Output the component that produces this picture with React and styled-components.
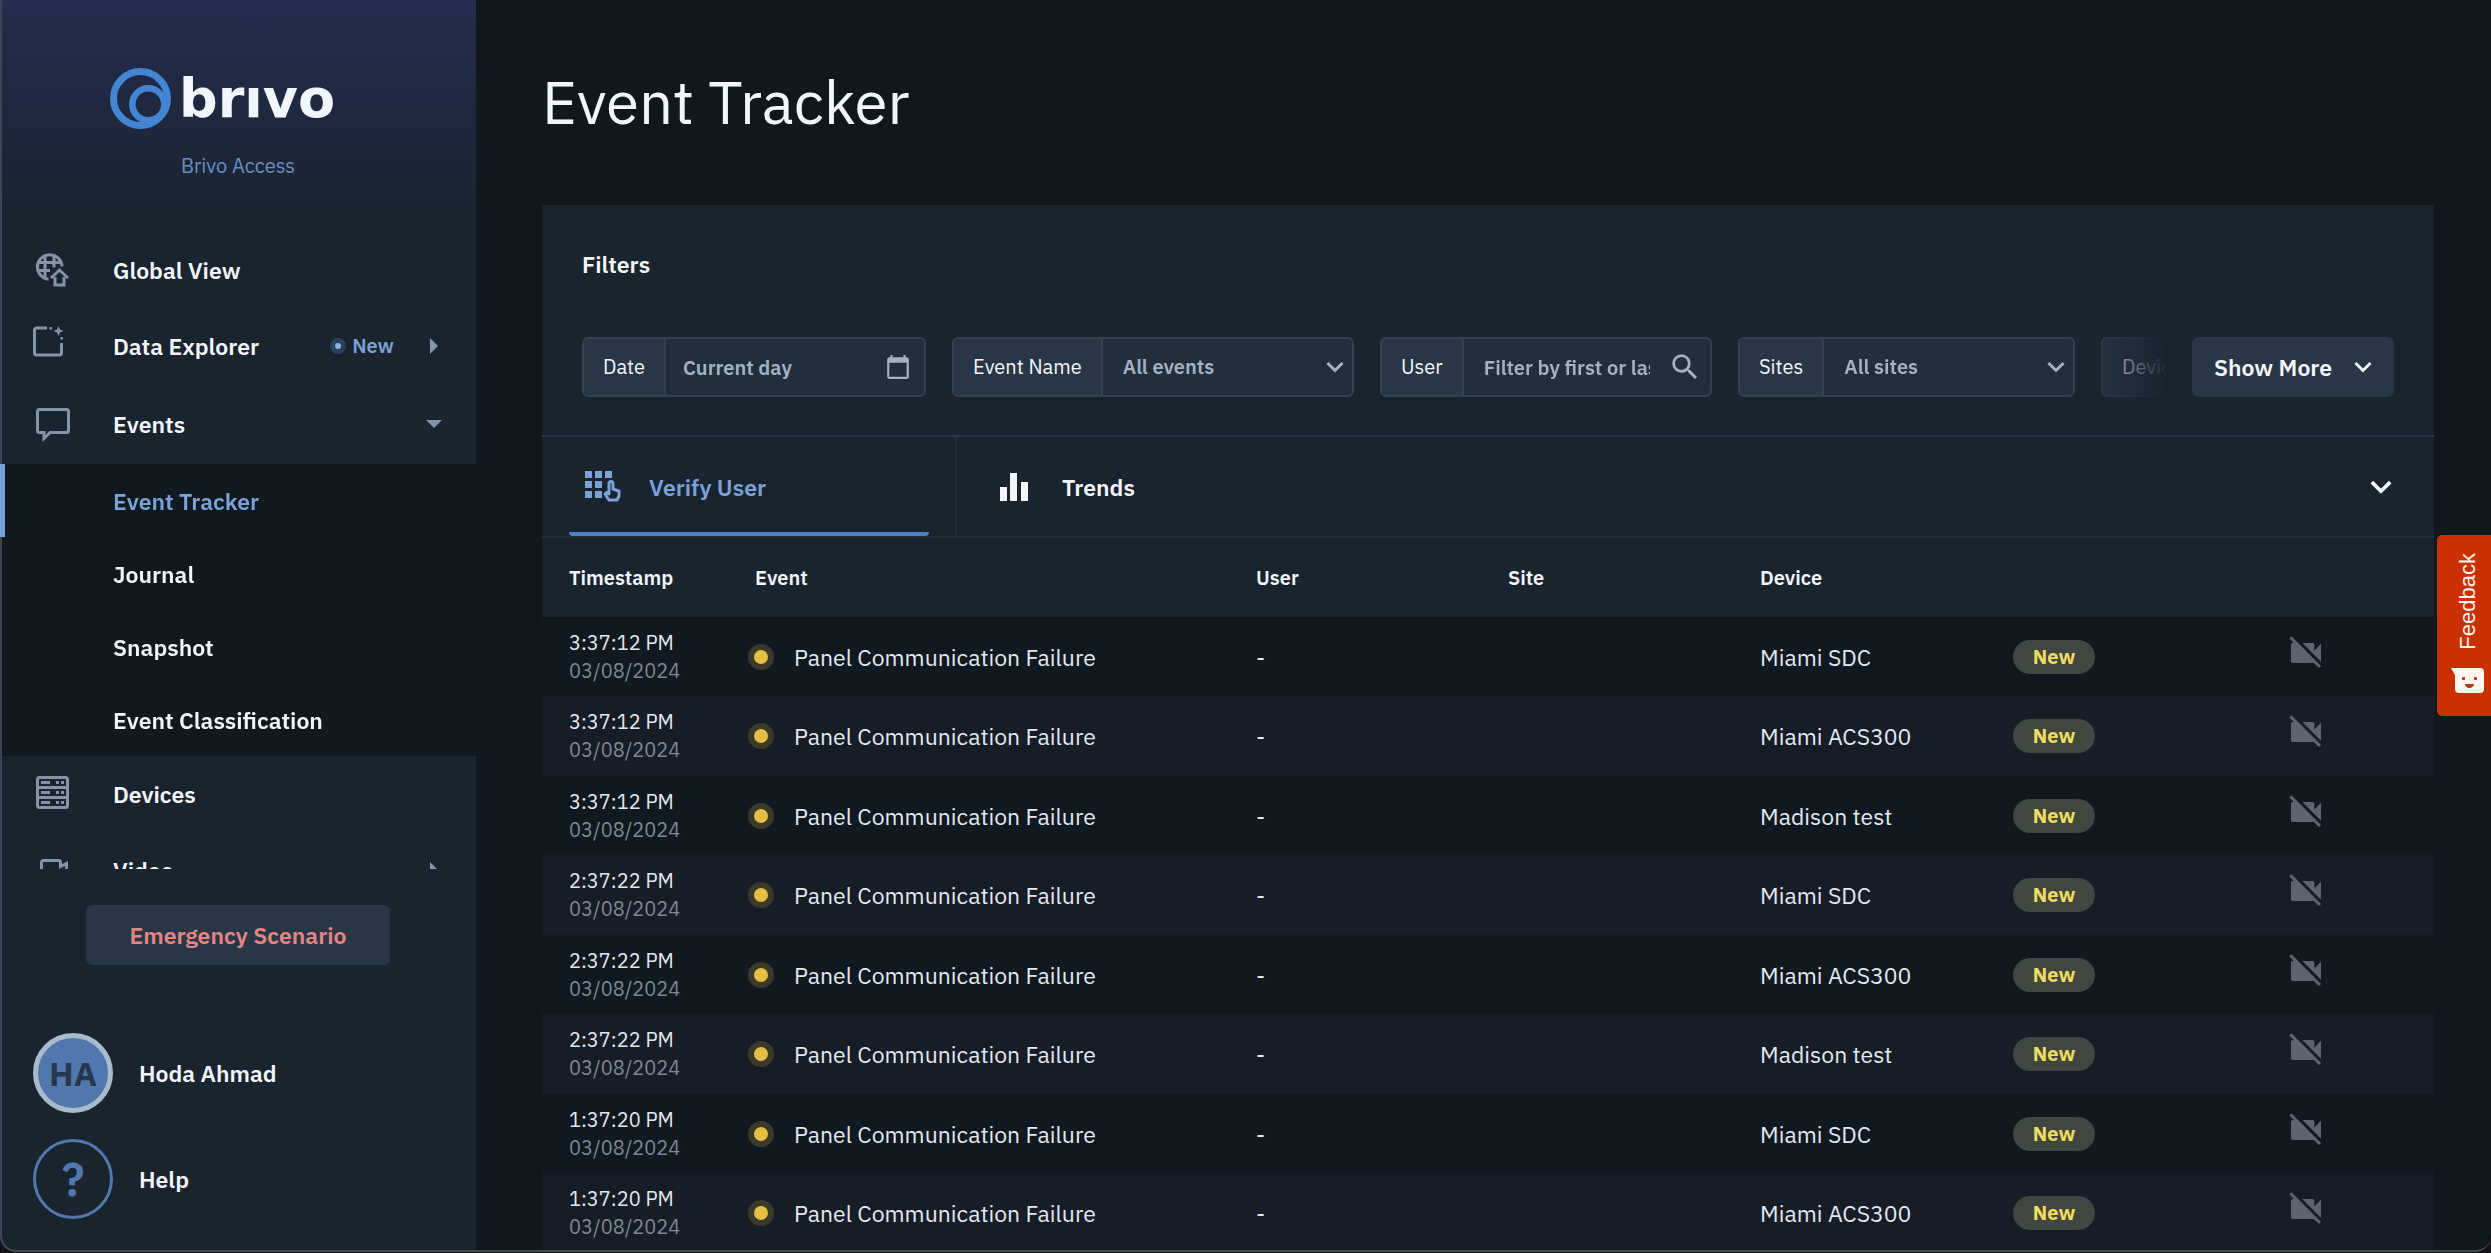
import React from "react";
import styled, { createGlobalStyle, css } from "styled-components";
import { MdSearch, MdVideocamOff } from "react-icons/md";

const events = [
  { time: "3:37:12 PM", device: "Miami SDC" },
  { time: "3:37:12 PM", device: "Miami ACS300" },
  { time: "3:37:12 PM", device: "Madison test" },
  { time: "2:37:22 PM", device: "Miami SDC" },
  { time: "2:37:22 PM", device: "Miami ACS300" },
  { time: "2:37:22 PM", device: "Madison test" },
  { time: "1:37:20 PM", device: "Miami SDC" },
  { time: "1:37:20 PM", device: "Miami ACS300" },
];

const subPages = ["Event Tracker", "Journal", "Snapshot", "Event Classification"];

const GlobeIcon = () => (
  <svg width="40" height="40" viewBox="0 0 40 40" fill="none" stroke="currentColor" strokeWidth="3">
    <path d="M15.500 29.200A12.300 12.300 0 1 1 29 16.500" />
    <path d="M4 12.500h25M4 20.500h13M12 4.500v24M21 4.500v13" />
    <path d="M18 28l8.500-8 8.500 8M22 27v8h9v-8" />
  </svg>
);

const ExplorerIcon = () => (
  <svg width="40" height="40" viewBox="0 0 40 40" fill="none" stroke="currentColor" strokeWidth="3">
    <path d="M14 2H3.500a2 2 0 0 0-2 2v23a2 2 0 0 0 2 2h23a2 2 0 0 0 2-2V17" />
    <path
      d="M25.500 0l1.500 3.500 3.500 1.500-3.500 1.500-1.500 3.500-1.500-3.500-3.500-1.500 3.500-1.500zM16.500 1h2.500v2.500h-2.500zM27.500 11h2.500v2.500h-2.500z"
      fill="currentColor"
      stroke="none"
    />
  </svg>
);

const BubbleIcon = () => (
  <svg width="40" height="40" viewBox="0 0 40 40" fill="none" stroke="currentColor" strokeWidth="3">
    <path d="M6.500 5.500h27a2 2 0 0 1 2 2v19a2 2 0 0 1-2 2H17l-6 6v-6H6.500a2 2 0 0 1-2-2v-19a2 2 0 0 1 2-2z" />
  </svg>
);

const ServerIcon = () => (
  <svg width="40" height="40" viewBox="0 0 40 40" fill="none" stroke="currentColor" strokeWidth="3">
    <rect x="4.500" y="3.500" width="30" height="30" rx="2" />
    <path d="M4 13.500h31M4 23.500h31" />
    <path d="M8 8.500h9M23 8.500h3M28 8.500h3M8 18.500h9M23 18.500h3M28 18.500h3M8 28.500h9M23 28.500h3M28 28.500h3" />
  </svg>
);

const VideoIcon = () => (
  <svg width="40" height="40" viewBox="0 0 40 40" fill="none" stroke="currentColor" strokeWidth="3">
    <path d="M10.500 10.500h15a2 2 0 0 1 2 2v4l6-3v13l-6-3v4a2 2 0 0 1-2 2h-15a2 2 0 0 1-2-2v-15a2 2 0 0 1 2-2z" />
  </svg>
);

const KeypadIcon = () => (
  <svg width="36" height="32" viewBox="0 0 36 32" fill="currentColor">
    <path d="M0 0h7v7H0zM10 0h7v7h-7zM20 0h7v7h-7zM0 10h7v7H0zM10 10h7v7h-7zM0 20h7v7H0zM10 20h7v7h-7z" />
    <path
      d="M24 12.500a2 2 0 0 1 4 0V18l6 2v5l-2 4h-8l-4-6 1.500-1.500L24 23z"
      fill="none"
      stroke="currentColor"
      strokeWidth="3"
      strokeLinejoin="round"
    />
  </svg>
);

const ChartIcon = () => (
  <svg width="28" height="28" viewBox="0 0 28 28" fill="currentColor">
    <path d="M0 14h7v14H0zM10 0h7v28h-7zM21 9h7v19h-7z" />
  </svg>
);

const CalendarIcon = () => (
  <svg width="26" height="26" viewBox="0 0 24 24" fill="currentColor">
    <path d="M20 3h-1V1h-2v2H7V1H5v2H4c-1.100 0-2 .9-2 2v16c0 1.100.9 2 2 2h16c1.100 0 2-.9 2-2V5c0-1.100-.9-2-2-2zm0 18H4V8h16v13z" />
  </svg>
);

const Chevron = ({ size = 18 }) => (
  <svg width={size} height={size} viewBox="0 0 18 18" fill="none" stroke="currentColor" strokeWidth="3">
    <path d="M1.500 5l7.500 7.500L16.500 5" />
  </svg>
);

const SmileIcon = () => (
  <svg width="34" height="26" viewBox="0 0 34 26">
    <path d="M0 0h29a4 4 0 0 1 4 4v17a4 4 0 0 1-4 4H8a4 4 0 0 1-4-4V7z" fill="#fff4ee" />
    <rect x="11" y="9" width="3" height="3" rx="1" fill="#a33a1c" />
    <rect x="23" y="9" width="3" height="3" rx="1" fill="#a33a1c" />
    <path d="M14 16h9a4.500 4 0 0 1-9 0z" fill="#a33a1c" />
  </svg>
);

function Logo() {
  return (
    <LogoRow>
      <svg width="61" height="61" viewBox="0 0 61 61" fill="none" stroke="#4385d2">
        <circle cx="30.500" cy="30.500" r="27" strokeWidth="7" />
        <circle cx="38.300" cy="36.300" r="16" strokeWidth="6.500" />
      </svg>
      <Wordmark>brıvo</Wordmark>
    </LogoRow>
  );
}

function Sidebar() {
  return (
    <Aside>
      <Brand>
        <Logo />
        <Product>Brivo Access</Product>
      </Brand>
      <Nav>
        <NavItem href="#global">
          <GlobeIcon />
          <NavLabel>Global View</NavLabel>
        </NavItem>
        <NavItem href="#explorer">
          <ExplorerIcon />
          <NavLabel>Data Explorer</NavLabel>
          <NewTag>
            <NewDot />
            New
          </NewTag>
          <Caret />
        </NavItem>
        <NavItem href="#events" $tall>
          <BubbleIcon />
          <NavLabel>Events</NavLabel>
          <Caret $open />
        </NavItem>
        <SubNav>
          {subPages.map((page, i) => (
            <SubItem key={page} href={`#page-${i}`} $active={i === 0}>
              {page}
            </SubItem>
          ))}
        </SubNav>
        <NavItem href="#devices">
          <ServerIcon />
          <NavLabel>Devices</NavLabel>
        </NavItem>
        <NavItem href="#video">
          <VideoIcon />
          <NavLabel>Video</NavLabel>
          <Caret />
        </NavItem>
      </Nav>
      <AsideFooter>
        <EmergencyButton type="button">Emergency Scenario</EmergencyButton>
        <FooterLink href="#account">
          <Avatar>HA</Avatar>
          Hoda Ahmad
        </FooterLink>
        <FooterLink href="#help">
          <Avatar $outline>?</Avatar>
          Help
        </FooterLink>
      </AsideFooter>
    </Aside>
  );
}

function Filters() {
  return (
    <FilterSection>
      <FilterTitle>Filters</FilterTitle>
      <FilterBar>
        <FilterTrack>
          <Field $width={344}>
            <FieldLabel htmlFor="date">Date</FieldLabel>
            <FieldBody $tight>
              <TextInput id="date" defaultValue="Current day" />
              <CalendarIcon />
            </FieldBody>
          </Field>
          <Field $width={402}>
            <FieldLabel htmlFor="event-name">Event Name</FieldLabel>
            <FieldBody>
              <Select id="event-name">
                <option>All events</option>
              </Select>
              <Chevron />
            </FieldBody>
          </Field>
          <Field $width={332}>
            <FieldLabel htmlFor="user">User</FieldLabel>
            <FieldBody>
              <TextInput id="user" placeholder="Filter by first or last name" />
              <SearchIcon size={34} />
            </FieldBody>
          </Field>
          <Field $width={337}>
            <FieldLabel htmlFor="sites">Sites</FieldLabel>
            <FieldBody>
              <Select id="sites">
                <option>All sites</option>
              </Select>
              <Chevron />
            </FieldBody>
          </Field>
          <Field $width={337}>
            <FieldLabel htmlFor="devices">Devices</FieldLabel>
            <FieldBody>
              <Select id="devices">
                <option>All devices</option>
              </Select>
              <Chevron />
            </FieldBody>
          </Field>
        </FilterTrack>
        <MoreButton type="button">
          Show More
          <Chevron />
        </MoreButton>
      </FilterBar>
    </FilterSection>
  );
}

function EventTable() {
  return (
    <Table>
      <colgroup>
        <Col $width={186} />
        <Col $width={501} />
        <Col $width={252} />
        <Col $width={252} />
        <Col $width={253} />
        <Col $width={277} />
        <Col $width={171} />
      </colgroup>
      <thead>
        <tr>
          <Th>Timestamp</Th>
          <Th>Event</Th>
          <Th>User</Th>
          <Th>Site</Th>
          <Th>Device</Th>
          <Th />
          <Th />
        </tr>
      </thead>
      <tbody>
        {events.map(({ time, device }, i) => (
          <Row key={i}>
            <Td>
              <Time>{time}</Time>
              <DateText>03/08/2024</DateText>
            </Td>
            <Td $inset={20}>
              <EventName>
                <Dot />
                Panel Communication Failure
              </EventName>
            </Td>
            <Td>-</Td>
            <Td />
            <Td>{device}</Td>
            <Td>
              <Pill>New</Pill>
            </Td>
            <IconCell>
              <MdVideocamOff size={40} />
            </IconCell>
          </Row>
        ))}
      </tbody>
    </Table>
  );
}

export default function App() {
  return (
    <>
      <GlobalStyle />
      <Shell>
        <Sidebar />
        <Main>
          <Title>Event Tracker</Title>
          <Card>
            <Filters />
            <Tabs>
              <TabSlot>
                <Tab type="button" $active>
                  <KeypadIcon />
                  Verify User
                </Tab>
              </TabSlot>
              <TabSlot>
                <Tab type="button">
                  <ChartIcon />
                  Trends
                </Tab>
              </TabSlot>
              <CollapseButton type="button" aria-label="Expand panel">
                <Chevron size={22} />
              </CollapseButton>
            </Tabs>
            <EventTable />
          </Card>
        </Main>
        <Feedback type="button">
          <FeedbackText>Feedback</FeedbackText>
          <SmileIcon />
        </Feedback>
      </Shell>
      <WindowEdge />
    </>
  );
}

const GlobalStyle = createGlobalStyle`
  * {
    box-sizing: border-box;
  }
  body {
    margin: 0;
    background: #10181e;
    color: #f2f6fb;
    font-family: "IBM Plex Sans", Roboto, sans-serif;
    font-size: 23px;
    line-height: 32px;
  }
  a {
    color: inherit;
    text-decoration: none;
  }
  button, input, select {
    font: inherit;
    color: inherit;
    border: 0;
    background: none;
    padding: 0;
    margin: 0;
  }
  svg {
    flex: none;
    display: block;
  }
`;

const Shell = styled.div`
  display: flex;
  height: 100vh;
  overflow: hidden;
`;
const WindowEdge = styled.div`
  position: fixed;
  inset: 0 0 1px;
  z-index: 1;
  pointer-events: none;
  border-left: 2px solid #3c4553;
  border-bottom: 2px solid #434853;
  border-radius: 0 0 16px 16px;
  box-shadow: 0 0 0 8px #14111a;
`;

/* Sidebar */
const Aside = styled.aside`
  flex: none;
  width: 476px;
  display: flex;
  flex-direction: column;
  font-weight: 600;
  background: linear-gradient(#242c50, #1a242f 215px);
`;
const Brand = styled.div`
  height: 232px;
  flex: none;
  padding-top: 68px;
  text-align: center;
`;
const LogoRow = styled.div`
  display: flex;
  align-items: center;
  gap: 8px;
  height: 61px;
  padding-left: 110px;
`;
const Wordmark = styled.span`
  font-family: "DejaVu Sans", sans-serif;
  font-weight: 700;
  font-size: 54px;
  line-height: 60px;
  color: #f1f5fc;
`;
const Product = styled.div`
  margin-top: 21px;
  font-size: 20px;
  font-weight: 400;
  color: #6a8ec4;
`;
const Nav = styled.nav`
  flex: 1;
  min-height: 0;
  overflow: hidden;
`;
const NavItem = styled.a`
  display: flex;
  align-items: center;
  height: ${({ $tall }) => ($tall ? 80 : 76)}px;
  padding: 0 34px 0 33px;

  > svg {
    color: #8394a6;
  }
`;
const NavLabel = styled.span`
  flex: 1;
  margin-left: 40px;
`;
const NewTag = styled.span`
  display: flex;
  align-items: center;
  gap: 6px;
  margin-right: 32px;
  font-size: 20px;
  color: #7ba1d9;
`;
const NewDot = styled.i`
  width: 16px;
  height: 16px;
  border: 5px solid #2a4160;
  border-radius: 50%;
  background: #8fb2e6;
`;
const Caret = styled.i`
  width: 16px;
  height: 16px;
  background: #8394a6;
  clip-path: ${({ $open }) =>
    $open ? "polygon(0 4px, 100% 4px, 50% 12px)" : "polygon(4px 0, 12px 50%, 4px 100%)"};
`;
const SubNav = styled.div`
  background: #101920;
`;
const SubItem = styled.a`
  position: relative;
  z-index: 2;
  display: flex;
  align-items: center;
  height: 73px;
  padding-left: 108px;
  border-left: 5px solid transparent;
  ${({ $active }) =>
    $active &&
    css`
      color: #7ba1d9;
      border-left-color: #7ba1d9;
    `}
`;
const AsideFooter = styled.div`
  flex: none;
  padding: 36px 33px 34px;
  display: flex;
  flex-direction: column;
  gap: 26px;
`;
const EmergencyButton = styled.button`
  align-self: center;
  width: 304px;
  height: 60px;
  margin-bottom: 42px;
  border-radius: 6px;
  background: #283747;
  color: #e68583;
  font-weight: 600;
`;
const FooterLink = styled.a`
  display: flex;
  align-items: center;
  gap: 26px;
`;
const Avatar = styled.span`
  display: flex;
  align-items: center;
  justify-content: center;
  width: 80px;
  height: 80px;
  border-radius: 50%;
  border: 5px solid #a9bacb;
  background: #5178ad;
  color: #25384f;
  font-size: 34px;
  font-weight: 700;
  ${({ $outline }) =>
    $outline &&
    css`
      border: 3px solid #5178ad;
      background: none;
      color: #5178ad;
      font-size: 46px;
      font-weight: 600;
    `}
`;

/* Main */
const Main = styled.main`
  flex: 1;
  min-width: 0;
  padding: 66px 57px 0 66px;
`;
const Title = styled.h1`
  margin: 0 0 67px;
  font-size: 60px;
  line-height: 72px;
  font-weight: 400;
`;
const Card = styled.section`
  background: #1a242f;
`;
const FilterSection = styled.div`
  padding: 43px 40px 38px;
`;
const FilterTitle = styled.h2`
  margin: 0 0 57px;
  font-size: 23px;
  line-height: 32px;
  font-weight: 600;
`;
const FilterBar = styled.div`
  display: flex;
  gap: 24px;
`;
const FilterTrack = styled.div`
  flex: 1;
  min-width: 0;
  display: flex;
  gap: 26px;
  overflow: hidden;
  mask-image: linear-gradient(to left, transparent, #000 90px);
`;
const Field = styled.div`
  flex: none;
  display: flex;
  width: ${({ $width }) => $width}px;
  height: 60px;
  border: 2px solid #33424f;
  border-radius: 6px;
  overflow: hidden;
  font-size: 20px;
  background: #212e3b;
`;
const FieldLabel = styled.label`
  flex: none;
  display: flex;
  align-items: center;
  padding: 0 19px;
  border-right: 2px solid #33424f;
  background: #283747;
`;
const FieldBody = styled.div`
  flex: 1;
  min-width: 0;
  display: flex;
  align-items: center;
  gap: 18px;
  padding: ${({ $tight }) => ($tight ? "0 13px 0 17px" : "0 8px 0 20px")};
  color: #a3b1c1;
  font-weight: 600;
`;
const TextInput = styled.input`
  flex: 1;
  min-width: 0;
  height: 100%;

  &::placeholder {
    color: #a3b1c1;
    opacity: 1;
  }
`;
const Select = styled.select`
  flex: 1;
  min-width: 0;
  height: 100%;
  appearance: none;
`;
const SearchIcon = styled(MdSearch)`
  flex: none;
`;
const MoreButton = styled.button`
  flex: none;
  display: flex;
  align-items: center;
  justify-content: space-between;
  width: 202px;
  height: 60px;
  padding: 0 22px;
  border-radius: 6px;
  background: #283747;
  font-weight: 600;
`;
const Tabs = styled.div`
  display: flex;
  height: 103px;
  border-top: 2px solid #2a3645;
  border-bottom: 2px solid #242f3c;
`;
const TabSlot = styled.div`
  padding: 0 26px 0 27px;

  & + & {
    border-left: 2px solid #222d39;
  }
`;
const Tab = styled.button`
  display: flex;
  align-items: center;
  gap: 28px;
  width: 360px;
  height: 99px;
  padding-left: 16px;
  font-weight: 600;
  ${({ $active }) =>
    $active
      ? css`
          color: #7ba1d9;
          background: linear-gradient(#4d82c4, #4d82c4) bottom / 100% 4px no-repeat;
          border-radius: 4px;
        `
      : css`
          gap: 34px;
        `}
`;
const CollapseButton = styled.button`
  margin-left: auto;
  padding: 0 42px;
`;

/* Table */
const Table = styled.table`
  width: 100%;
  table-layout: fixed;
  border-collapse: collapse;
`;
const Col = styled.col`
  width: ${({ $width }) => $width}px;
`;
const Th = styled.th`
  height: 79px;
  padding: 0 0 0 27px;
  text-align: left;
  font-size: 20px;
  font-weight: 600;
`;
const Row = styled.tr`
  height: 79px;
  background: #101920;

  &:nth-child(even) {
    height: 80px;
    background: #161d27;
  }
`;
const Td = styled.td`
  padding: 0 0 0 ${({ $inset = 27 }) => $inset}px;
  color: #e3e9f1;
  white-space: nowrap;
`;
const Time = styled.div`
  font-size: 20px;
  line-height: 28px;
`;
const DateText = styled(Time)`
  color: #7d8894;
`;
const EventName = styled.div`
  display: flex;
  align-items: center;
  gap: 20px;
`;
const Dot = styled.i`
  width: 26px;
  height: 26px;
  border: 6px solid #3b392a;
  border-radius: 50%;
  background: #e3bf45;
`;
const Pill = styled.span`
  display: flex;
  align-items: center;
  justify-content: center;
  width: 82px;
  height: 34px;
  border-radius: 17px;
  background: #3f4740;
  color: #efdb5e;
  font-size: 20px;
  font-weight: 700;
`;
const IconCell = styled.td`
  padding: 16px 0 0 23px;
  vertical-align: top;
  color: #5d646d;
`;

const Feedback = styled.button`
  position: fixed;
  top: 535px;
  right: 0;
  z-index: 3;
  display: flex;
  flex-direction: column;
  align-items: center;
  justify-content: flex-end;
  gap: 18px;
  width: 54px;
  height: 181px;
  padding: 0 0 22px 8px;
  border-radius: 5px 0 0 5px;
  background: #c93102;
  color: #fff4ee;
`;
const FeedbackText = styled.span`
  writing-mode: vertical-rl;
  rotate: 180deg;
  font-family: "Liberation Sans", Arial, sans-serif;
  font-size: 22px;
  line-height: 24px;
`;
